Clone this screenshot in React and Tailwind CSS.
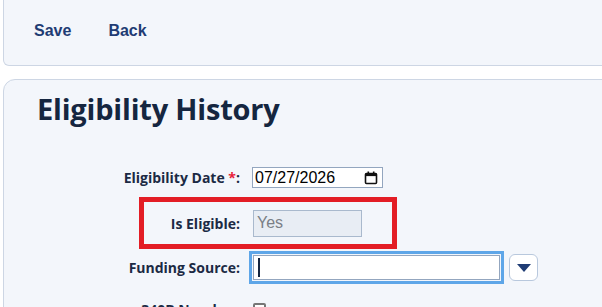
export default function App() {
  const label = "font-['Open_Sans',sans-serif] font-bold text-[14px] text-[#1b2a44] text-right";
  return (
    <div className="w-[602px] h-[307px] overflow-hidden bg-white font-['Liberation_Sans',Arial,sans-serif]">
      {/* toolbar */}
      <div className="ml-[3px] w-[640px] h-[66px] bg-[#f3f6fb] border border-t-0 border-[#cdd6e4] rounded-bl-[6px] flex items-center pl-[30px] gap-[37px] pb-[3px]">
        <button className="text-[16px] font-bold text-[#1f3c74]">Save</button>
        <button className="text-[16px] font-bold text-[#1f3c74]">Back</button>
      </div>

      {/* main panel */}
      <div className="mt-[13px] ml-[3px] w-[640px] h-[300px] bg-[#f3f6fb] border border-[#cdd6e4] rounded-tl-[12px]">
        <h1 className="pl-[33px] pt-[9px] font-['Open_Sans',sans-serif] font-bold text-[29px] leading-[40px] text-[#152640] tracking-[-0.2px]">
          Eligibility History
        </h1>

        <div className="mt-[38px] flex flex-col">
          {/* date */}
          <div className="flex items-center h-[21px]">
            <div className={`${label} w-[236px]`}>
              Eligibility Date <span className="text-[#e8203a]">*</span>:
            </div>
            <div className="ml-[12px] w-[131px] h-[21px] bg-white border border-[#93a6bf] flex items-center justify-between pl-[2px] pr-[4px]">
              <span className="text-[16px] text-black leading-none">07/27/2026</span>
              <svg width="14" height="14" viewBox="0 0 14 14">
                <rect x="1.5" y="2.5" width="11" height="10" rx="1" fill="none" stroke="#111" strokeWidth="1.6" />
                <rect x="1.5" y="2.5" width="11" height="2.6" fill="#111" />
                <rect x="3.5" y="0.5" width="1.6" height="3" fill="#111" />
                <rect x="8.9" y="0.5" width="1.6" height="3" fill="#111" />
              </svg>
            </div>
          </div>

          {/* is eligible */}
          <div className="mt-[9px] ml-[135px] w-[258px] h-[52px] border-[5px] border-[#e31d25] flex items-center">
            <div className={`${label} w-[96px]`}>Is Eligible:</div>
            <div className="ml-[13px] w-[109px] h-[27px] bg-[#e8edf4] border border-[#a9b9cd] flex items-center pl-[3px]">
              <span className="text-[16px] text-[#7a7f86]">Yes</span>
            </div>
          </div>

          {/* funding source */}
          <div className="mt-[2px] flex items-center h-[33px]">
            <div className={`${label} w-[236px]`}>Funding Source:</div>
            <div className="ml-[9px] w-[255px] h-[33px] border-[3px] border-[#5ea6e8] p-[1px]">
              <div className="w-full h-full bg-white border border-[#93a6bf] flex items-center pl-[4px]">
                <div className="w-[1.5px] h-[19px] bg-[#152640]" />
              </div>
            </div>
            <button className="ml-[5px] w-[29px] h-[27px] bg-white border border-[#b8c8dd] rounded-[6px] flex items-center justify-center">
              <svg width="14" height="8" viewBox="0 0 14 8">
                <path d="M0 0 H14 L7 8 Z" fill="#1f3c74" />
              </svg>
            </button>
          </div>

          {/* next row (cut off) */}
          <div className="mt-[15px] flex items-center h-[20px]">
            <div className={`${label} w-[236px]`}>340B Number:</div>
            <div className="ml-[13px] w-[13px] h-[13px] border-2 border-[#767676] rounded-[2px] bg-white" />
          </div>
        </div>
      </div>
    </div>
  );
}
